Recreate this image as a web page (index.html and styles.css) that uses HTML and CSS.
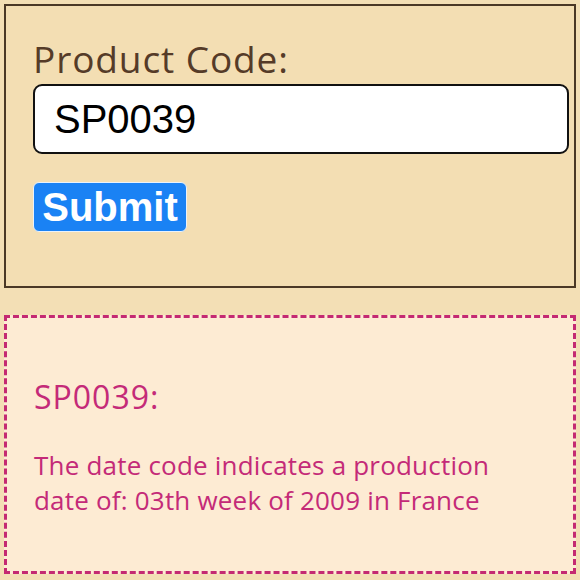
FILE: index.html
```html
<!DOCTYPE html>
<html lang="en">
<head>
<meta charset="utf-8">
<title>Product Code</title>
<link rel="stylesheet" href="styles.css">
</head>
<body>
<main class="page">
  <form class="lookup">
    <label class="lookup-label" for="code">Product Code:</label>
    <input class="lookup-input" id="code" type="text" value="SP0039">
    <button class="lookup-submit" type="button">Submit</button>
  </form>
  <section class="result">
    <h2 class="result-title">SP0039:</h2>
    <p class="result-text">The date code indicates a production date of: 03th week of 2009 in France</p>
  </section>
</main>
</body>
</html>
```

FILE: styles.css
```css
html, body {
  margin: 0;
  padding: 0;
  background: #f3dfb5;
}
.page {
  box-sizing: border-box;
  width: 580px;
  padding: 4px;
  display: flex;
  flex-direction: column;
  gap: 27px;
  font-family: "Open Sans", "Lato", sans-serif;
}
.lookup {
  box-sizing: border-box;
  height: 284px;
  border: 2px solid #4a3826;
  background: #f3deb3;
  padding: 30px 6px 0 27px;
  display: flex;
  flex-direction: column;
  align-items: flex-start;
}
.lookup-label {
  font-size: 37px;
  line-height: 46px;
  letter-spacing: 0.9px;
  color: #553b28;
}
.lookup-input {
  box-sizing: border-box;
  width: 536px;
  height: 70px;
  margin-top: 2px;
  border: 2px solid #111;
  border-radius: 9px;
  background: #fff;
  padding: 0 19px;
  font-family: "Liberation Sans", Arial, sans-serif;
  font-size: 40px;
  color: #000;
}
.lookup-submit {
  margin-top: 28px;
  box-sizing: border-box;
  height: 50px;
  width: 154px;
  padding: 0;
  background: #1a82f4;
  border: 1px solid #e9f2fb;
  border-radius: 6px;
  color: #fff;
  font-family: "Liberation Sans", Arial, sans-serif;
  font-weight: bold;
  font-size: 40px;
  line-height: 48px;
}
.result {
  box-sizing: border-box;
  height: 259px;
  border: 3px dashed #c42a72;
  background: #fdebd3;
  padding: 60px 50px 0 27px;
  color: #c42a78;
}
.result-title {
  margin: 0;
  font-size: 32px;
  line-height: 38px;
  letter-spacing: 1px;
  font-weight: normal;
}
.result-text {
  margin: 32px 0 0 0;
  font-size: 26px;
  line-height: 35px;
  letter-spacing: 0.2px;
}
```
